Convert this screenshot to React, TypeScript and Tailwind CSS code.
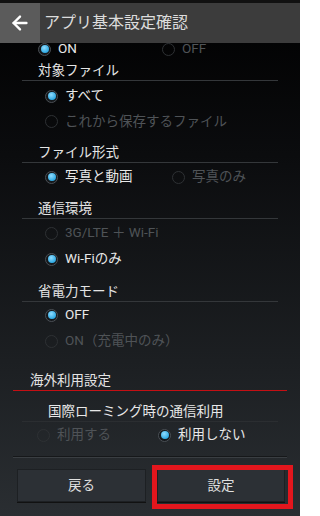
import { ArrowLeft } from "lucide-react";

type Opt = { label: string; checked?: boolean; disabled?: boolean };

const Radio = ({ checked }: { checked?: boolean }) =>
  checked ? (
    <span className="flex h-[13px] w-[13px] shrink-0 items-center justify-center rounded-full border border-[#4a4f55] bg-[#15181b]">
      <span className="h-[8px] w-[8px] rounded-full bg-[radial-gradient(circle_at_40%_35%,#8fdcff,#2fa9e2_70%)]" />
    </span>
  ) : (
    <span className="h-[13px] w-[13px] shrink-0 rounded-full border border-[#2e3134]" />
  );

const Option = ({ opt, className = "" }: { opt: Opt; className?: string }) => (
  <div className={`flex items-center gap-[7px] ${className}`}>
    <Radio checked={opt.checked} />
    <span className={opt.disabled ? "text-[#4f5357]" : "text-[#e8e8e8]"}>{opt.label}</span>
  </div>
);

const Heading = ({ text, className = "" }: { text: string; className?: string }) => (
  <>
    <div className={`flex h-[18px] items-center pl-[38px] text-[#e4e4e4] ${className}`}>{text}</div>
    <div className="mx-[22px] h-px bg-[#34373a]" />
  </>
);

const App = () => {
  return (
    <div
      className="relative flex h-[516px] w-[300px] flex-col overflow-hidden bg-[linear-gradient(to_bottom,#000_0%,#0b0c0e_30%,#1c1f22_70%,#2a2e32_100%)] text-[13.5px] leading-none"
      style={{ fontFamily: 'Roboto, "Noto Sans CJK JP", sans-serif' }}
    >
      {/* status strip */}
      <div className="h-[3px] shrink-0 bg-[#111]" />

      {/* action bar */}
      <div className="relative z-10 flex h-[40px] shrink-0 items-center bg-[#3c3c3c]">
        <div className="flex h-full w-[40px] items-center justify-center bg-[#5b5b5b]">
          <ArrowLeft size={22} strokeWidth={2.6} className="text-white" />
        </div>
        <span className="pl-[4px] text-[16px] text-[#dcdcdc]">アプリ基本設定確認</span>
      </div>

      <div className="flex flex-1 flex-col">
        {/* cut-off first row */}
        <div className="mt-[-7px] flex h-[26px] items-center">
          <Option opt={{ label: "ON", checked: true }} className="ml-[38px] w-[124px]" />
          <Option opt={{ label: "OFF", disabled: true }} />
        </div>

        <Heading text="対象ファイル" />
        <div className="mt-[2px]">
          <Option opt={{ label: "すべて", checked: true }} className="ml-[45px] h-[26px]" />
          <Option opt={{ label: "これから保存するファイル", disabled: true }} className="ml-[45px] h-[25px]" />
        </div>

        <Heading text="ファイル形式" className="mt-[10px]" />
        <div className="mt-px flex h-[26px] items-center">
          <Option opt={{ label: "写真と動画", checked: true }} className="ml-[45px] w-[127px]" />
          <Option opt={{ label: "写真のみ", disabled: true }} />
        </div>

        <Heading text="通信環境" className="mt-[10px]" />
        <div className="mt-px">
          <Option opt={{ label: "3G/LTE ＋ Wi-Fi", disabled: true }} className="ml-[45px] h-[26px]" />
          <Option opt={{ label: "Wi-Fiのみ", checked: true }} className="ml-[45px] h-[26px]" />
        </div>

        <Heading text="省電力モード" className="mt-[11px]" />
        <div>
          <Option opt={{ label: "OFF", checked: true }} className="ml-[45px] h-[26px]" />
          <Option opt={{ label: "ON（充電中のみ）", disabled: true }} className="ml-[45px] h-[26px]" />
        </div>

        {/* overseas section */}
        <div className="mt-[18px] flex h-[18px] items-center pl-[30px] text-[#e4e4e4]">海外利用設定</div>
        <div className="mx-[13px] h-px bg-[#c40f14]" />

        <div className="mt-[12px] flex h-[18px] items-center pl-[48px] text-[#e8e8e8]">国際ローミング時の通信利用</div>
        <div className="mx-[22px] h-px bg-[#2b2e31]" />
        <div className="flex h-[26px] items-center">
          <Option opt={{ label: "利用する", disabled: true }} className="ml-[37px] w-[121px]" />
          <Option opt={{ label: "利用しない", checked: true }} />
        </div>

        <div className="mx-[13px] mt-[8px] h-px bg-[#16181a]" />
        <div className="mx-[13px] h-px bg-[#3a3e42]" />

        {/* buttons */}
        <div className="mt-[11px] flex gap-[11px] pl-[17px] pr-[15px]">
          <button className="flex h-[33px] w-[129px] items-center justify-center border border-[#1d2023] bg-[#2c3035] text-[#e0e0e0] shadow-[0_1px_0_#111]">
            戻る
          </button>
          <button className="flex h-[33px] w-[128px] items-center justify-center border border-[#1d2023] bg-[#2c3035] text-[#e0e0e0] shadow-[0_1px_0_#111]">
            設定
          </button>
        </div>
      </div>

      {/* red highlight annotation */}
      <div className="absolute left-[152px] top-[465px] h-[44px] w-[141px] border-[5px] border-[#e3161d]" />
    </div>
  );
};

export default App;
